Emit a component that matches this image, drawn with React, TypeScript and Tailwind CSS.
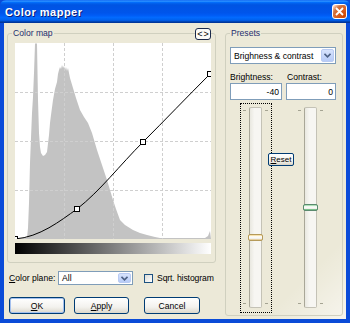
import React from "react";

const HIST =
  "0,196 12,195 13,185 14,160 15,120 16,95 17,70 18,54 19,30 20,1 21,0 22,1 23,57 24,90 25,104 26,110 28,113 30,112 32,109 34,92 35,80 36,72 38,57 40,46 42,39 43,31 44,27 45,24 46,26 47,22 48,25 49,23 50,27 51,24 52,28 53,25 54,30 55,35 58,45 61,55 65,67 69,74 73,80 77,90 82,107 87,122 92,137 95,147 98,157 101,166 105,177 110,182 118,187 125,190 132,192 140,194 145,195 190,195 193,193 195,188 196,196";

function ComboArrow() {
  return (
    <div className="w-[13px] h-full rounded-[2px] border border-[#B9CBF3] bg-[linear-gradient(180deg,#D7E3FD_0%,#B7CBF7_100%)] flex items-center justify-center">
      <svg width="7" height="5" viewBox="0 0 7 5">
        <path d="M0.5 0.8 L3.5 3.8 L6.5 0.8" fill="none" stroke="#4D6185" strokeWidth="1.6" />
      </svg>
    </div>
  );
}

function XPButton({ children, def, className }: { children: React.ReactNode; def?: boolean; className?: string }) {
  return (
    <div
      className={
        "h-[17px] rounded-[3px] border border-[#003C74] bg-[linear-gradient(180deg,#FFFFFF_0%,#F3F2EE_60%,#DCD8CC_100%)] flex items-center justify-center text-black " +
        (def ? "shadow-[inset_0_0_0_1px_#A4C0EE] " : "") +
        (className ?? "")
      }
    >
      {children}
    </div>
  );
}

function Slider({ focus, thumbTop, hot }: { focus?: boolean; thumbTop: number; hot?: boolean }) {
  return (
    <div
      className={
        "relative w-[32px] h-[210px] " +
        (focus ? "border border-dotted border-black" : "border border-transparent")
      }
    >
      <div className="absolute left-[2px] top-[6px] w-[3px] h-px bg-[#A5A493]" />
      <div className="absolute right-[3px] top-[6px] w-[3px] h-px bg-[#A5A493]" />
      <div className="absolute left-[2px] bottom-[8px] w-[3px] h-px bg-[#A5A493]" />
      <div className="absolute right-[3px] bottom-[8px] w-[3px] h-px bg-[#A5A493]" />
      <div className="ml-[8px] mt-[3px] w-[13px] h-[201px] relative rounded-[2px] border border-[#C4C2B6] border-l-[#A9A798] bg-[linear-gradient(90deg,#E9E8E0_0%,#F7F6F2_40%,#F7F6F2_100%)]">
        <div
          className={
            "absolute left-[-2px] w-[15px] h-[7px] rounded-[2px] border " +
            (hot
              ? "border-[#B59A5A] bg-[linear-gradient(180deg,#F6D88D_0%,#FFFFFF_35%,#F2F1EC_70%,#E2C07A_100%)]"
              : "border-[#5A8A6E] bg-[linear-gradient(180deg,#8FD39C_0%,#FFFFFF_35%,#F2F1EC_70%,#3FA85A_100%)]")
          }
          style={{ top: thumbTop }}
        />
      </div>
    </div>
  );
}

export default function App() {
  return (
    <div className="w-[350px] h-[323px] flex flex-col font-['Liberation_Sans',Arial,sans-serif] text-[8.6px] leading-[10px] text-black whitespace-nowrap select-none overflow-hidden bg-[#0A4BD8]">
      {/* Title bar */}
      <div className="h-[23px] shrink-0 rounded-t-[6px] bg-[linear-gradient(180deg,#0058EE_0%,#3593FF_4%,#288EFF_6%,#127DFF_8%,#036FFC_10%,#0262EE_14%,#0057E5_20%,#0054E3_24%,#0055EB_56%,#005BF5_66%,#026AFE_76%,#0062EF_86%,#0052D6_92%,#0040AB_94%,#003092_100%)] flex items-center pl-[5px] pr-[3px]">
        <span className="text-white font-bold text-[11px] tracking-[0.5px] [text-shadow:1px_1px_0_#0A1E7A]">
          Color mapper
        </span>
        <div className="ml-auto mb-[1px] w-[15px] h-[15px] rounded-[3px] border border-white bg-[radial-gradient(circle_at_90%_90%,#CC4600_0%,#DC6527_55%,#CD7546_70%,#FFCCB2_90%,#FFFFFF_100%)] flex items-center justify-center">
          <svg width="9" height="9" viewBox="0 0 9 9">
            <path d="M1 1 L8 8 M8 1 L1 8" stroke="white" strokeWidth="1.8" />
          </svg>
        </div>
      </div>

      {/* Client area */}
      <div className="flex-1 flex border-x-[4px] border-b-[4px] border-[#0A4BD8] bg-[#ECE9D8] bg-[linear-gradient(315deg,rgba(255,255,255,0.55)_0%,rgba(255,255,255,0.15)_9%,rgba(255,255,255,0)_13%)] pt-[5px] px-[3px]">
        {/* Left column */}
        <div className="w-[209px] flex flex-col">
          <div className="relative">
            <fieldset className="border border-[#D0D0BF] rounded-[3px]">
              <legend className="ml-[4px] px-px text-[#1F2F6E] leading-[10px]">Color map</legend>
              <div className="pl-[7px] pr-[4px] pt-[5px] pb-[8px]">
                <svg width="196" height="196" viewBox="0 0 196 196" className="block bg-white">
                  <polygon points={HIST} fill="#C3C3C3" />
                  <g stroke="#CFCFCF" strokeDasharray="3 2" strokeWidth="1">
                    <line x1="49.5" y1="0" x2="49.5" y2="196" />
                    <line x1="98.5" y1="0" x2="98.5" y2="196" />
                    <line x1="147.5" y1="0" x2="147.5" y2="196" />
                    <line x1="0" y1="49.5" x2="196" y2="49.5" />
                    <line x1="0" y1="98.5" x2="196" y2="98.5" />
                    <line x1="0" y1="147.5" x2="196" y2="147.5" />
                  </g>
                  <path
                    d="M0,196 C25,194 45,178 62,166 C85,148 105,122 128,99 C150,77 172,54 195,31"
                    fill="none"
                    stroke="#000"
                    strokeWidth="1"
                  />
                  <rect x="59.5" y="163.5" width="5" height="5" fill="white" stroke="#000" />
                  <rect x="125.5" y="96.5" width="5" height="5" fill="white" stroke="#000" />
                  <rect x="192.5" y="28.5" width="5" height="5" fill="white" stroke="#000" />
                  <rect x="-2.5" y="193.5" width="5" height="5" fill="white" stroke="#000" />
                </svg>
                <div className="mt-[4px] w-[196px] h-[11px] bg-[linear-gradient(90deg,#000000_0%,#7F7F7F_50%,#FFFFFF_100%)]" />
              </div>
            </fieldset>
            <div className="absolute top-0 right-[5px] w-[16px] h-[12px] rounded-[3px] border border-[#1B2A4A] bg-[#FBFBF8] flex items-center justify-center text-[9px] leading-[9px] tracking-[1px] pl-px">
              &lt;&gt;
            </div>
          </div>

          {/* Color plane row */}
          <div className="mt-[8px] h-[14px] flex items-center pl-[2px]">
            <span className="w-[49px] shrink-0">
              <span className="underline">C</span>olor plane:
            </span>
            <div className="w-[75px] shrink-0 h-[14px] border border-[#7F9DB9] bg-white flex items-center pl-[3px] pr-px py-px">
              <span className="flex-1">All</span>
              <ComboArrow />
            </div>
            <div className="ml-[11px] shrink-0 w-[9px] h-[9px] border border-[#1C5180] bg-[linear-gradient(135deg,#DCDCD7_0%,#FFFFFF_100%)]" />
            <span className="ml-[4px] tracking-[-0.1px]">Sqrt. histogram</span>
          </div>

          {/* Buttons */}
          <div className="mt-[12px] flex pl-[2px]">
            <XPButton def className="w-[56px]">
              <span>
                <span className="underline">O</span>K
              </span>
            </XPButton>
            <XPButton className="ml-[9px] w-[55px]">
              <span>
                <span className="underline">A</span>pply
              </span>
            </XPButton>
            <XPButton className="ml-[15px] w-[56px]">Cancel</XPButton>
          </div>
        </div>

        {/* Right column */}
        <div className="ml-[9px] w-[118px]">
          <fieldset className="border border-[#D0D0BF] rounded-[3px] h-[288px]">
            <legend className="ml-[4px] px-px text-[#1F2F6E] leading-[10px]">Presets</legend>
            <div className="pl-[4px] pr-[6px] pt-[9px]">
              <div className="w-[106px] h-[17px] border border-[#7F9DB9] bg-white flex items-center pl-[3px] pr-px py-px">
                <span className="flex-1">Brighness &amp; contrast</span>
                <ComboArrow />
              </div>
              <div className="mt-[8px] grid grid-cols-[52px_50px] gap-x-[4px]">
                <span className="h-[10px]">Brightness:</span>
                <span className="h-[10px] pl-px">Contrast:</span>
                <div className="mt-px h-[17px] border border-[#7F9DB9] bg-white flex items-center justify-end pr-[2px]">
                  -40
                </div>
                <div className="mt-px h-[17px] border border-[#7F9DB9] bg-white flex items-center justify-end pr-[2px]">
                  0
                </div>
                <div className="relative mt-[3px] flex justify-center">
                  <Slider focus hot thumbTop={126} />
                  <div className="absolute left-[38px] top-[50px] w-[26px] h-[13px] rounded-[2px] border border-[#003C74] bg-[linear-gradient(180deg,#FFFFFF_0%,#F1EFE8_70%,#D8D3C6_100%)] flex items-center justify-center text-[8px] leading-[8px]">
                    <span>
                      <span className="underline">R</span>eset
                    </span>
                  </div>
                </div>
                <div className="mt-[3px] flex justify-center">
                  <Slider thumbTop={96} />
                </div>
              </div>
            </div>
          </fieldset>
        </div>
      </div>
    </div>
  );
}
